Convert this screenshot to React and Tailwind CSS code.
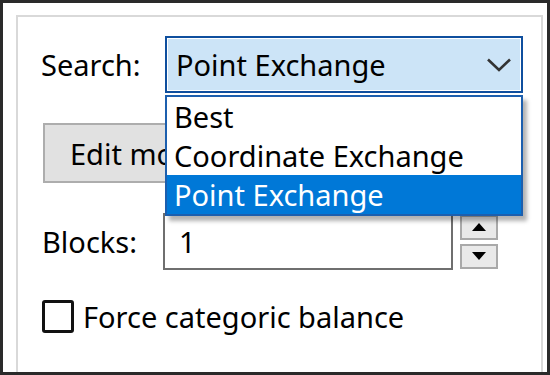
import { useState } from 'react'

const font = { fontFamily: '"Noto Sans", "Open Sans", sans-serif' }

function Chevron() {
    return (
        <svg width="24" height="14" viewBox="0 0 24 14" className="shrink-0">
            <polyline points="1,1.5 12,12 23,1.5" fill="none" stroke="#333" strokeWidth="2.6" />
        </svg>
    )
}

function SpinButton({ dir }) {
    return (
        <div className="w-[38px] h-[25px] border-2 border-[#a9a9a9] bg-[#e9e9e9] flex items-center justify-center">
            <svg width="14" height="8" viewBox="0 0 14 8">
                {dir === 'up' ? (
                    <polygon points="0,8 14,8 7,0" fill="#000" />
                ) : (
                    <polygon points="0,0 14,0 7,8" fill="#000" />
                )}
            </svg>
        </div>
    )
}

export default function App() {
    const [selected, setSelected] = useState('Point Exchange')
    const [checked, setChecked] = useState(false)
    const options = ['Best', 'Coordinate Exchange', 'Point Exchange']

    return (
        <div
            className="w-[550px] h-[375px] bg-white border-[3px] border-[#2a2a2a] pt-[12px] pl-[13px] pr-[4px] overflow-hidden text-[29px] text-black leading-none"
            style={font}
        >
            <div className="relative h-full border-t-2 border-l-2 border-r-2 border-[#d9d9d9] flex flex-col">
                {/* search row */}
                <div className="flex items-center mt-[19px] h-[57px]">
                    <span className="w-[147px] pl-[23px] shrink-0">Search:</span>
                    <div className="w-[358px] h-full border-2 border-[#0f4f9e] bg-[#cce4f7] shadow-[inset_0_0_0_1px_#ffffff] flex items-center justify-between pl-[9px] pr-[10px]">
                        <span>{selected}</span>
                        <Chevron />
                    </div>
                </div>

                {/* edit button */}
                <div className="mt-[30px] pl-[25px]">
                    <button className="w-[210px] h-[60px] border-2 border-[#adadad] bg-[#e1e1e1] text-left pl-[25px] whitespace-nowrap">
                        Edit model
                    </button>
                </div>

                {/* blocks row */}
                <div className="flex items-center mt-[30px] h-[57px]">
                    <span className="w-[145px] pl-[24px] shrink-0">Blocks:</span>
                    <div className="w-[290px] h-full border-2 border-[#6f6f6f] bg-white flex items-center pl-[14px]">
                        1
                    </div>
                    <div className="ml-[7px] flex flex-col gap-[4px]">
                        <SpinButton dir="up" />
                        <SpinButton dir="down" />
                    </div>
                </div>

                {/* checkbox row */}
                <label className="flex items-center mt-[30px] pl-[24px] gap-[9px]">
                    <span
                        onClick={() => setChecked(!checked)}
                        className="w-[32px] h-[33px] border-[3px] border-[#111] rounded-[3px] bg-white shrink-0"
                    />
                    <span>Force categoric balance</span>
                </label>

                {/* open dropdown list */}
                <div className="absolute left-[147px] top-[78px] w-[358px] border-2 border-[#1c5fae] bg-white shadow-[4px_5px_4px_rgba(0,0,0,0.3)]">
                    {options.map((o) => (
                        <div
                            key={o}
                            onClick={() => setSelected(o)}
                            className={
                                o === selected
                                    ? 'h-[39px] flex items-center pl-[7px] bg-[#0078d7] text-white'
                                    : 'h-[39px] flex items-center pl-[7px]'
                            }
                        >
                            {o}
                        </div>
                    ))}
                </div>
            </div>
        </div>
    )
}
